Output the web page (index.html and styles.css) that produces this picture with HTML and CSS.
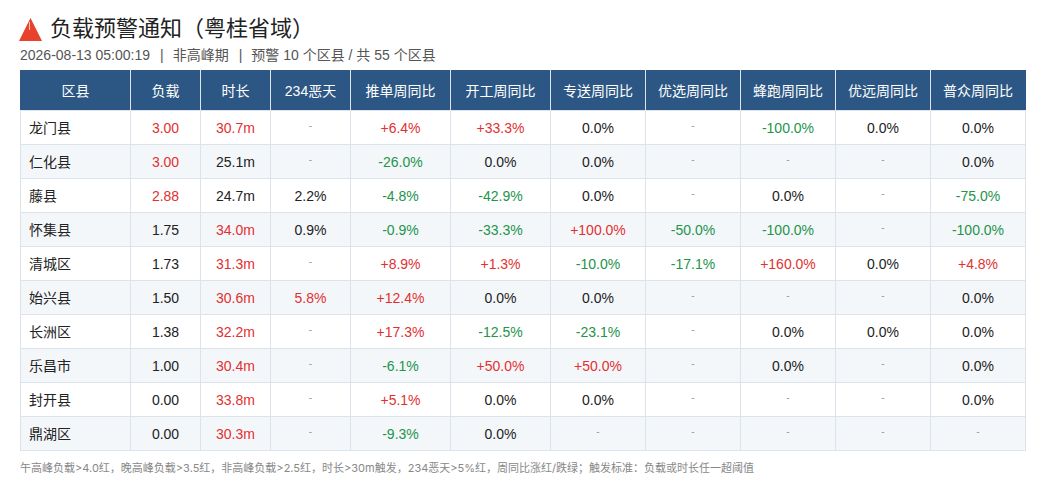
FILE: index.html
```html
<!DOCTYPE html>
<html lang="zh">
<head>
<meta charset="utf-8">
<title>负载预警通知</title>
<link rel="stylesheet" href="styles.css">
</head>
<body>
<div class="page">
  <div class="title">
    <svg class="warn" width="23" height="23" viewBox="0 0 23 23"><polygon points="11.5,0 23,23 0,23" fill="#e8412c"/><rect x="10" y="4" width="1" height="8" fill="#fff" opacity="0.7"/></svg>
    <h1>负载预警通知（粤桂省域）</h1>
  </div>
  <div class="sub">2026-08-13 05:00:19<span class="sep">|</span>非高峰期<span class="sep">|</span>预警 10 个区县 / 共 55 个区县</div>
  <table class="grid">
    <colgroup>
      <col style="width:110px"><col style="width:70px"><col style="width:70px"><col style="width:80px"><col style="width:100px"><col style="width:100px"><col style="width:95px"><col style="width:95px"><col style="width:95px"><col style="width:95px"><col style="width:95px">
    </colgroup>
    <thead>
      <tr><th>区县</th><th>负载</th><th>时长</th><th>234恶天</th><th>推单周同比</th><th>开工周同比</th><th>专送周同比</th><th>优选周同比</th><th>蜂跑周同比</th><th>优远周同比</th><th>普众周同比</th></tr>
    </thead>
    <tbody>
      <tr><td>龙门县</td><td class="r">3.00</td><td class="r">30.7m</td><td class="d">-</td><td class="r">+6.4%</td><td class="r">+33.3%</td><td>0.0%</td><td class="d">-</td><td class="g">-100.0%</td><td>0.0%</td><td>0.0%</td></tr>
      <tr><td>仁化县</td><td class="r">3.00</td><td>25.1m</td><td class="d">-</td><td class="g">-26.0%</td><td>0.0%</td><td>0.0%</td><td class="d">-</td><td class="d">-</td><td class="d">-</td><td>0.0%</td></tr>
      <tr><td>藤县</td><td class="r">2.88</td><td>24.7m</td><td>2.2%</td><td class="g">-4.8%</td><td class="g">-42.9%</td><td>0.0%</td><td class="d">-</td><td>0.0%</td><td class="d">-</td><td class="g">-75.0%</td></tr>
      <tr><td>怀集县</td><td>1.75</td><td class="r">34.0m</td><td>0.9%</td><td class="g">-0.9%</td><td class="g">-33.3%</td><td class="r">+100.0%</td><td class="g">-50.0%</td><td class="g">-100.0%</td><td class="d">-</td><td class="g">-100.0%</td></tr>
      <tr><td>清城区</td><td>1.73</td><td class="r">31.3m</td><td class="d">-</td><td class="r">+8.9%</td><td class="r">+1.3%</td><td class="g">-10.0%</td><td class="g">-17.1%</td><td class="r">+160.0%</td><td>0.0%</td><td class="r">+4.8%</td></tr>
      <tr><td>始兴县</td><td>1.50</td><td class="r">30.6m</td><td class="r">5.8%</td><td class="r">+12.4%</td><td>0.0%</td><td>0.0%</td><td class="d">-</td><td class="d">-</td><td class="d">-</td><td>0.0%</td></tr>
      <tr><td>长洲区</td><td>1.38</td><td class="r">32.2m</td><td class="d">-</td><td class="r">+17.3%</td><td class="g">-12.5%</td><td class="g">-23.1%</td><td class="d">-</td><td>0.0%</td><td>0.0%</td><td>0.0%</td></tr>
      <tr><td>乐昌市</td><td>1.00</td><td class="r">30.4m</td><td class="d">-</td><td class="g">-6.1%</td><td class="r">+50.0%</td><td class="r">+50.0%</td><td class="d">-</td><td>0.0%</td><td class="d">-</td><td>0.0%</td></tr>
      <tr><td>封开县</td><td>0.00</td><td class="r">33.8m</td><td class="d">-</td><td class="r">+5.1%</td><td>0.0%</td><td>0.0%</td><td class="d">-</td><td class="d">-</td><td class="d">-</td><td>0.0%</td></tr>
      <tr><td>鼎湖区</td><td>0.00</td><td class="r">30.3m</td><td class="d">-</td><td class="g">-9.3%</td><td>0.0%</td><td class="d">-</td><td class="d">-</td><td class="d">-</td><td class="d">-</td><td class="d">-</td></tr>
    </tbody>
  </table>
  <div class="foot">午高峰负载&gt;4.0红，晚高峰负载&gt;3.5红，非高峰负载&gt;2.5红，时长&gt;30m触发，234恶天&gt;5%红，周同比涨红/跌绿；触发标准：负载或时长任一超阈值</div>
</div>
</body>
</html>
```

FILE: styles.css
```css
html, body {
  margin: 0;
  padding: 0;
  background: #fff;
}
body {
  font-family: "Liberation Sans", "Noto Sans CJK SC", sans-serif;
  color: #222;
}
.page {
  padding: 16px 20px 0 20px;
  width: 1005px;
}
.title {
  display: flex;
  align-items: center;
  gap: 8px;
  height: 26px;
}
.warn {
  margin-left: -1px;
  flex: none;
}
.title h1 {
  margin: 0;
  font-size: 22px;
  font-weight: normal;
  color: #222;
  line-height: 26px;
}
.sub {
  margin-top: 4px;
  font-size: 14px;
  color: #555;
  line-height: 18px;
  height: 18px;
}
.sep {
  margin: 0 9px 0 10px;
}
.grid {
  margin-top: 6px;
  border-collapse: collapse;
  table-layout: fixed;
  width: 1005px;
  font-size: 14px;
  line-height: 16px;
}
.grid th {
  background: #2c5784;
  color: #fff;
  font-weight: normal;
  height: 39px;
  padding: 0;
  border: 1px solid #dfe5ec;
  border-top-color: #2c5784;
  text-align: center;
}
.grid th:first-child { border-left-color: #2c5784; }
.grid th:last-child { border-right-color: #2c5784; }
.grid td {
  height: 33px;
  padding: 0;
  border: 1px solid #dde3ea;
  text-align: center;
  color: #222;
}
.grid td:first-child {
  text-align: left;
  padding-left: 8px;
}
.grid tbody tr:nth-child(even) td {
  background: #f4f7fa;
}
.grid td.r { color: #e3302f; }
.grid td.g { color: #23944a; }
.grid td.d { color: #999; font-size: 10px; height: 29px; padding-bottom: 4px; }
.foot {
  margin-top: 9px;
  font-family: Inter, "Noto Sans CJK SC", sans-serif;
  font-size: 11px;
  color: #888;
  line-height: 16px;
}
```
